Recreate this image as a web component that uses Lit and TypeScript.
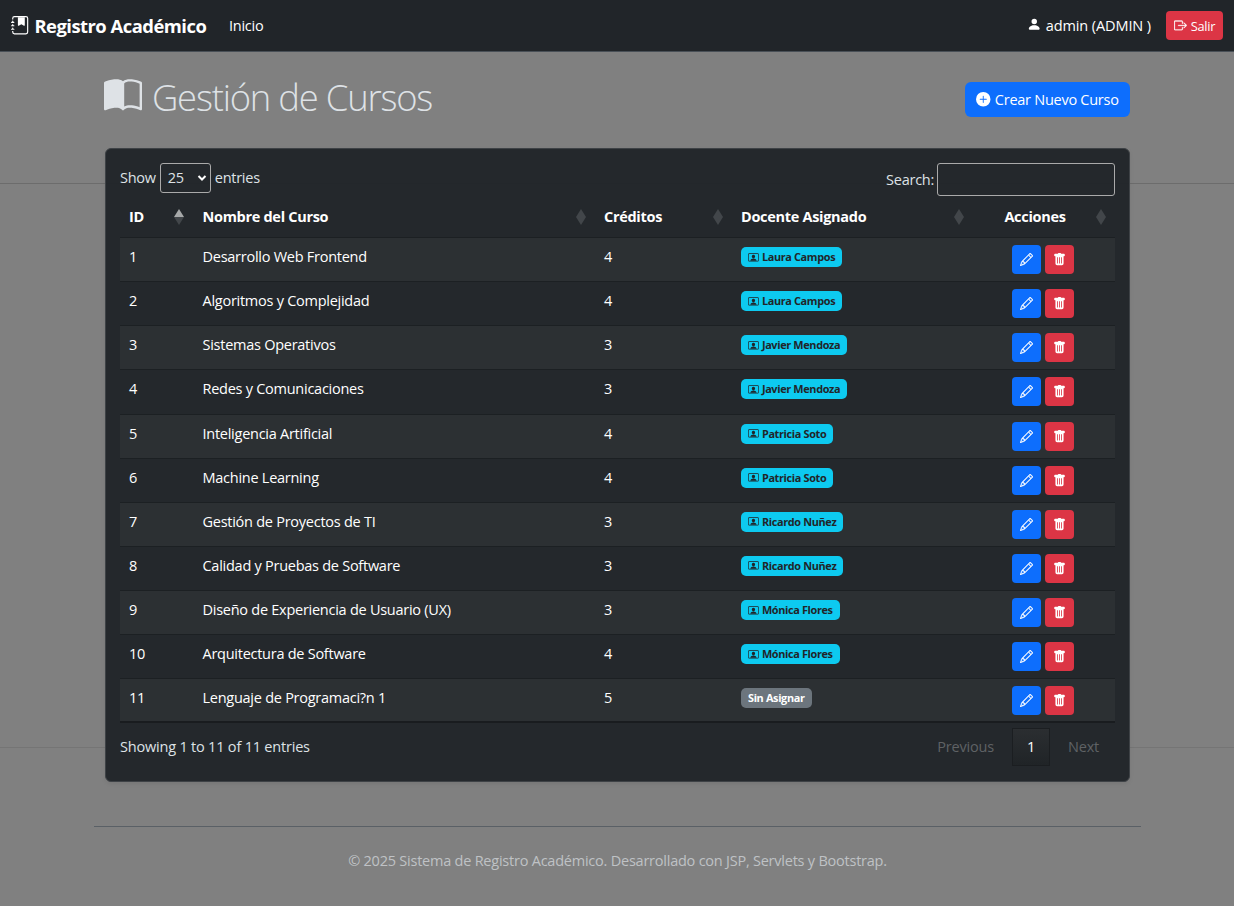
import { LitElement, html, css, svg } from "lit";
import { customElement } from "lit/decorators.js";

const ICONS: Record<string, string[]> = {
  journal: [
    "M6 1h6v7a.5.5 0 0 1-.757.429L9 7.083 6.757 8.43A.5.5 0 0 1 6 8z",
    "M3 0h10a2 2 0 0 1 2 2v12a2 2 0 0 1-2 2H3a2 2 0 0 1-2-2v-1h1v1a1 1 0 0 0 1 1h10a1 1 0 0 0 1-1V2a1 1 0 0 0-1-1H3a1 1 0 0 0-1 1v1H1V2a2 2 0 0 1 2-2",
    "M1 5v-.5a.5.5 0 0 1 1 0V5h.5a.5.5 0 0 1 0 1h-2a.5.5 0 0 1 0-1zm0 3v-.5a.5.5 0 0 1 1 0V8h.5a.5.5 0 0 1 0 1h-2a.5.5 0 0 1 0-1zm0 3v-.5a.5.5 0 0 1 1 0v.5h.5a.5.5 0 0 1 0 1h-2a.5.5 0 0 1 0-1z",
  ],
  book: [
    "M8.5 2.687c.654-.689 1.782-.886 3.112-.752 1.234.124 2.503.523 3.388.893v9.923c-.918-.35-2.107-.692-3.287-.81-1.094-.111-2.278-.039-3.213.492zM8 1.783C7.015.936 5.587.81 4.287.94c-1.514.153-3.042.672-3.994 1.105A.5.5 0 0 0 0 2.5v11a.5.5 0 0 0 .707.455c.882-.4 2.303-.881 3.68-1.02 1.409-.142 2.59.087 3.223.877a.5.5 0 0 0 .78 0c.633-.79 1.814-1.019 3.222-.877 1.378.139 2.8.62 3.681 1.02A.5.5 0 0 0 16 13.5v-11a.5.5 0 0 0-.293-.455c-.952-.433-2.48-.952-3.994-1.105C10.413.809 8.985.936 8 1.783",
  ],
  plus: [
    "M16 8A8 8 0 1 1 0 8a8 8 0 0 1 16 0M8.5 4.5a.5.5 0 0 0-1 0v3h-3a.5.5 0 0 0 0 1h3v3a.5.5 0 0 0 1 0v-3h3a.5.5 0 0 0 0-1h-3z",
  ],
  person: [
    "M3 14s-1 0-1-1 1-4 6-4 6 3 6 4-1 1-1 1zm5-6a3 3 0 1 0 0-6 3 3 0 0 0 0 6",
  ],
  exit: [
    "M10 12.5a.5.5 0 0 1-.5.5h-8a.5.5 0 0 1-.5-.5v-9a.5.5 0 0 1 .5-.5h8a.5.5 0 0 1 .5.5v2a.5.5 0 0 0 1 0v-2A1.5 1.5 0 0 0 9.5 2h-8A1.5 1.5 0 0 0 0 3.5v9A1.5 1.5 0 0 0 1.5 14h8a1.5 1.5 0 0 0 1.5-1.5v-2a.5.5 0 0 0-1 0z",
    "M15.854 8.354a.5.5 0 0 0 0-.708l-3-3a.5.5 0 0 0-.708.708L14.293 7.5H5.5a.5.5 0 0 0 0 1h8.793l-2.147 2.146a.5.5 0 0 0 .708.708z",
  ],
  pencil: [
    "M12.146.146a.5.5 0 0 1 .708 0l3 3a.5.5 0 0 1 0 .708l-10 10a.5.5 0 0 1-.168.11l-5 2a.5.5 0 0 1-.65-.65l2-5a.5.5 0 0 1 .11-.168zM11.207 2.5 13.5 4.793 14.793 3.5 12.5 1.207zm1.586 3L10.5 3.207 4 9.707V10h.5a.5.5 0 0 1 .5.5v.5h.5a.5.5 0 0 1 .5.5v.5h.293zm-9.761 5.175-.106.106-1.528 3.821 3.821-1.528.106-.106A.5.5 0 0 1 5 12.5V12h-.5a.5.5 0 0 1-.5-.5V11h-.5a.5.5 0 0 1-.468-.325",
  ],
  trash: [
    "M2.5 1a1 1 0 0 0-1 1v1a1 1 0 0 0 1 1H3v9a2 2 0 0 0 2 2h6a2 2 0 0 0 2-2V4h.5a1 1 0 0 0 1-1V2a1 1 0 0 0-1-1H10a1 1 0 0 0-1-1H7a1 1 0 0 0-1 1zm3 4a.5.5 0 0 1 .5.5v7a.5.5 0 0 1-1 0v-7a.5.5 0 0 1 .5-.5M8 5a.5.5 0 0 1 .5.5v7a.5.5 0 0 1-1 0v-7A.5.5 0 0 1 8 5m3 .5v7a.5.5 0 0 1-1 0v-7a.5.5 0 0 1 1 0",
  ],
  teacher: [
    "M10.500 6.500a2.500 2.500 0 1 1-5 0 2.500 2.500 0 0 1 5 0M8 9.500c-3 0-4.500 1.300-4.500 3.500h9c0-2.200-1.500-3.500-4.500-3.500",
    "M2 2a2 2 0 0 0-2 2v8a2 2 0 0 0 2 2h12a2 2 0 0 0 2-2V4a2 2 0 0 0-2-2zM1 4a1 1 0 0 1 1-1h12a1 1 0 0 1 1 1v8a1 1 0 0 1-1 1H2a1 1 0 0 1-1-1z",
  ],
};

const icon = (name: string) => html`<svg class="icon ${name}" viewBox="0 0 16 16" fill="currentColor" fill-rule="evenodd" aria-hidden="true">
  ${ICONS[name].map((d) => svg`<path d=${d}></path>`)}
</svg>`;

interface Course {
  id: number;
  name: string;
  credits: number;
  teacher?: string;
}

const COURSES: Course[] = [
  { id: 1, name: "Desarrollo Web Frontend", credits: 4, teacher: "Laura Campos" },
  { id: 2, name: "Algoritmos y Complejidad", credits: 4, teacher: "Laura Campos" },
  { id: 3, name: "Sistemas Operativos", credits: 3, teacher: "Javier Mendoza" },
  { id: 4, name: "Redes y Comunicaciones", credits: 3, teacher: "Javier Mendoza" },
  { id: 5, name: "Inteligencia Artificial", credits: 4, teacher: "Patricia Soto" },
  { id: 6, name: "Machine Learning", credits: 4, teacher: "Patricia Soto" },
  { id: 7, name: "Gestión de Proyectos de TI", credits: 3, teacher: "Ricardo Nuñez" },
  { id: 8, name: "Calidad y Pruebas de Software", credits: 3, teacher: "Ricardo Nuñez" },
  { id: 9, name: "Diseño de Experiencia de Usuario (UX)", credits: 3, teacher: "Mónica Flores" },
  { id: 10, name: "Arquitectura de Software", credits: 4, teacher: "Mónica Flores" },
  { id: 11, name: "Lenguaje de Programaci?n 1", credits: 5 },
];

@customElement("app-root")
export class AppRoot extends LitElement {
  static styles = css`
    :host {
      display: flex;
      flex-direction: column;
      box-sizing: border-box;
      height: 906px;
      overflow: hidden;
      color: #dee2e6;
      font: 14.5px/22px "Open Sans", "Noto Sans", sans-serif;
      letter-spacing: -0.26px;
      background:
        linear-gradient(#6c6c6c, #6c6c6c) 0 183px / 100% 1px no-repeat,
        linear-gradient(#757575, #757575) 0 747px / 100% 1px no-repeat,
        #808080;
    }
    * { box-sizing: border-box; }
    .icon { width: 1em; height: 1em; flex: none; display: block; }
    .pencil, .exit { stroke: currentColor; stroke-width: 0.35; }
    button { font: inherit; letter-spacing: inherit; border: 0; margin: 0; color: #fff; display: flex; align-items: center; justify-content: center; }
    .navbar {
      height: 52px; flex: none; display: flex; align-items: center;
      padding: 0 11px; background: #212529; border-bottom: 1px solid #495057; color: #fff;
    }
    .brand { display: flex; align-items: center; gap: 5px; font-size: 18.4px; font-weight: 700; letter-spacing: -0.5px; width: 218px; white-space: nowrap; }
    .nav-link { flex: 1; }
    .user { display: flex; align-items: center; gap: 4px; margin-right: 15px; white-space: pre; letter-spacing: -0.1px; }
    .person { position: relative; top: -1px; }
    .logout { width: 57px; height: 29px; border-radius: 4px; background: #dc3545; font-size: 12.8px; gap: 4px; }
    .head {
      flex: none; height: 96px; display: flex; justify-content: space-between; align-items: flex-start;
      padding: 0 104px;
    }
    h1 { margin: 21px 0 0; font-size: 36.4px; line-height: 48px; font-weight: 300; display: flex; align-items: center; gap: 10px; white-space: nowrap; letter-spacing: -1.2px; }
    .book { position: relative; top: -1px; width: 38px; height: 38px; }
    .create { width: 165px; height: 35px; margin-top: 30px; border-radius: 6px; background: #0d6efd; gap: 4px; }
    .card {
      flex: none; width: 1025px; height: 634px; margin-left: 105px; padding: 14px 14px 0 14px;
      background: rgba(33, 37, 41, 0.97); border: 1px solid #3e4246; border-radius: 6px;
      box-shadow: 0 2px 4px rgba(0, 0, 0, 0.075);
    }
    .tools { display: flex; justify-content: space-between; align-items: flex-start; height: 33px; }
    .length { display: flex; align-items: center; gap: 4px; }
    .select { width: 51px; height: 30px; border: 1px solid #aaa; border-radius: 3px; display: flex; align-items: center; justify-content: space-between; padding: 0 3px 0 7px; }
    .chev { width: 10px; height: 8px; }
    .search { display: flex; align-items: center; gap: 3px; }
    .search input { width: 178px; height: 33px; border: 1px solid #aaa; border-radius: 3px; background: transparent; padding: 0; }
    .row { display: grid; grid-template-columns: 73.500px 401.500px 137px 241px 1fr; height: 44.130px; border-bottom: 1px solid #1c2023; color: #fff; }
    .cell { padding: 8px 9px 0; position: relative; white-space: nowrap; }
    .row.header { height: 42px; font-weight: 700; letter-spacing: -0.3px; }
    .header .cell { padding-top: 10px; }
    .row.odd { background: #2c3033; }
    .row.last { border-bottom: 2px solid #191c1f; }
    .sort { position: absolute; right: 9.500px; top: 13px; width: 10px; height: 16px; }
    .center { text-align: center; padding-right: 27px; }
    .badge { display: inline-flex; align-items: center; gap: 3px; height: 20px; border-radius: 5px; padding: 0 7px; font-size: 10.9px; font-weight: 700; letter-spacing: -0.35px; line-height: 20px; vertical-align: top; margin-top: 1px; background: #0dcaf0; color: #212529; }
    .badge.none { background: #6c757d; color: #fff; }
    .actions { display: flex; gap: 4px; padding: 7px 0 0 39px; }
    .actions button { width: 29px; height: 29px; border-radius: 4px; background: #0d6efd; font-size: 13px; padding: 0; }
    .actions .del { background: #dc3545; }
    .foot { display: flex; justify-content: space-between; padding-top: 4px; }
    .info { padding-top: 9px; letter-spacing: -0.2px; }
    .pager { display: flex; align-items: center; height: 39px; color: #5f6265; padding-right: 16px; gap: 18px; letter-spacing: -0.2px; }
    .page { width: 38px; height: 38px; display: flex; align-items: center; justify-content: center; color: #fff; border: 1px solid #1b1e21; background: linear-gradient(#2b2e31, #202427); }
    footer { margin: 44px 93px 0 94px; padding-top: 23px; border-top: 1px solid #5a6066; text-align: center; color: #bfc2c5; letter-spacing: -0.23px; }
  `;

  private sort(active = false) {
    return html`<svg class="sort" viewBox="0 0 10 16" aria-hidden="true">
      <path d="M0 8 5 0l5 8z" fill=${active ? "#a6a8a9" : "#42464a"}></path>
      <path d="M0 8h10l-5 8z" fill="#42464a"></path>
    </svg>`;
  }

  render() {
    return html`
      <nav class="navbar">
        <div class="brand">${icon("journal")}<span>Registro Académico</span></div>
        <div class="nav-link"><span>Inicio</span></div>
        <div class="user">${icon("person")}<span>admin (ADMIN )</span></div>
        <button class="logout">${icon("exit")}<span>Salir</span></button>
      </nav>
      <header class="head">
        <h1>${icon("book")}<span>Gestión de Cursos</span></h1>
        <button class="create">${icon("plus")}<span>Crear Nuevo Curso</span></button>
      </header>
      <main class="card">
        <div class="tools">
          <div class="length">
            <span>Show</span>
            <span class="select">25<svg class="chev" viewBox="0 0 10 8"><path d="m1.500 2 3.500 3.500L8.500 2" fill="none" stroke="#fff" stroke-width="2"></path></svg></span>
            <span>entries</span>
          </div>
          <label class="search"><span>Search:</span><input type="search" /></label>
        </div>
        <div class="row header">
          <div class="cell"><span>ID</span>${this.sort(true)}</div>
          <div class="cell"><span>Nombre del Curso</span>${this.sort()}</div>
          <div class="cell"><span>Créditos</span>${this.sort()}</div>
          <div class="cell"><span>Docente Asignado</span>${this.sort()}</div>
          <div class="cell center"><span>Acciones</span>${this.sort()}</div>
        </div>
        ${COURSES.map(
          (c) => html`<div class="row ${c.id % 2 ? "odd" : ""} ${c.id === 11 ? "last" : ""}">
            <div class="cell"><span>${c.id}</span></div>
            <div class="cell"><span>${c.name}</span></div>
            <div class="cell"><span>${c.credits}</span></div>
            <div class="cell">
              ${c.teacher
                ? html`<span class="badge">${icon("teacher")}<span>${c.teacher}</span></span>`
                : html`<span class="badge none">Sin Asignar</span>`}
            </div>
            <div class="actions">
              <button>${icon("pencil")}</button>
              <button class="del">${icon("trash")}</button>
            </div>
          </div>`,
        )}
        <div class="foot">
          <div class="info"><span>Showing 1 to 11 of 11 entries</span></div>
          <div class="pager"><span>Previous</span><span class="page">1</span><span>Next</span></div>
        </div>
      </main>
      <footer><span>© 2025 Sistema de Registro Académico. Desarrollado con JSP, Servlets y Bootstrap.</span></footer>
    `;
  }
}
